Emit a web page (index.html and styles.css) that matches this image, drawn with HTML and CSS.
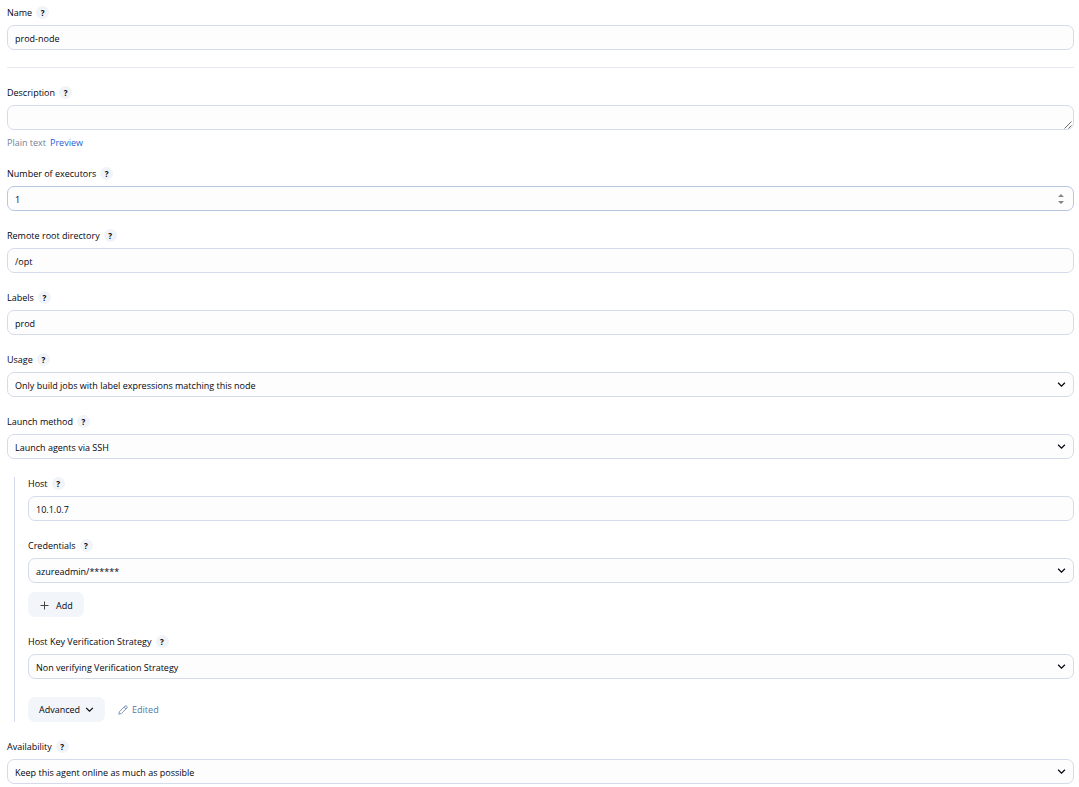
FILE: index.html
```html
<!DOCTYPE html>
<html lang="en">
<head>
    <meta charset="UTF-8">
    <meta name="viewport" content="width=device-width, initial-scale=1.0">
    <title>prod-node Configure</title>
    <link rel="stylesheet" href="styles.css">
</head>
<body>
    <form class="config">
        <div class="field">
            <div class="field-label">
                <label for="name">Name</label>
                <button type="button" class="help">?</button>
            </div>
            <input class="control" type="text" id="name" value="prod-node">
        </div>
        <hr>
        <div class="field">
            <div class="field-label">
                <label for="description">Description</label>
                <button type="button" class="help">?</button>
            </div>
            <div class="control-wrap">
                <textarea class="control" id="description" rows="1"></textarea>
                <svg class="grip" viewBox="0 0 8 8"><path d="M0.5 7.5L7.5 0.5M4.5 7.5L7.5 4.5"/></svg>
            </div>
            <div class="preview">
                <span>Plain text</span>
                <a href="#">Preview</a>
            </div>
        </div>
        <div class="field">
            <div class="field-label">
                <label for="executors">Number of executors</label>
                <button type="button" class="help">?</button>
            </div>
            <div class="control-wrap">
                <input class="control hovered" type="number" id="executors" value="1">
                <svg class="stepper" viewBox="0 0 8 12"><path d="M1 4L4 1L7 4ZM1 8L4 11L7 8Z"/></svg>
            </div>
        </div>
        <div class="field">
            <div class="field-label">
                <label for="root">Remote root directory</label>
                <button type="button" class="help">?</button>
            </div>
            <input class="control" type="text" id="root" value="/opt">
        </div>
        <div class="field">
            <div class="field-label">
                <label for="labels">Labels</label>
                <button type="button" class="help">?</button>
            </div>
            <input class="control" type="text" id="labels" value="prod">
        </div>
        <div class="field">
            <div class="field-label">
                <label for="usage">Usage</label>
                <button type="button" class="help">?</button>
            </div>
            <div class="control-wrap">
                <select class="control" id="usage">
                    <option>Only build jobs with label expressions matching this node</option>
                </select>
                <svg class="arrow" viewBox="0 0 8 8"><path d="M1 2.5L4 5.5L7 2.5"/></svg>
            </div>
        </div>
        <div class="field">
            <div class="field-label">
                <label for="launch">Launch method</label>
                <button type="button" class="help">?</button>
            </div>
            <div class="control-wrap">
                <select class="control" id="launch">
                    <option>Launch agents via SSH</option>
                </select>
                <svg class="arrow" viewBox="0 0 8 8"><path d="M1 2.5L4 5.5L7 2.5"/></svg>
            </div>
        </div>
        <div class="nested">
            <div class="field">
                <div class="field-label">
                    <label for="host">Host</label>
                    <button type="button" class="help">?</button>
                </div>
                <input class="control" type="text" id="host" value="10.1.0.7">
            </div>
            <div class="field">
                <div class="field-label">
                    <label for="credentials">Credentials</label>
                    <button type="button" class="help">?</button>
                </div>
                <div class="control-wrap">
                    <select class="control" id="credentials">
                        <option>azureadmin/******</option>
                    </select>
                    <svg class="arrow" viewBox="0 0 8 8"><path d="M1 2.5L4 5.5L7 2.5"/></svg>
                </div>
                <button type="button" class="btn btn-add">
                    <svg class="plus" viewBox="0 0 9 9"><path d="M4.5 0.5V8.5M0.5 4.5H8.5"/></svg>
                    Add
                </button>
            </div>
            <div class="field">
                <div class="field-label">
                    <label for="strategy">Host Key Verification Strategy</label>
                    <button type="button" class="help">?</button>
                </div>
                <div class="control-wrap">
                    <select class="control" id="strategy">
                        <option>Non verifying Verification Strategy</option>
                    </select>
                    <svg class="arrow" viewBox="0 0 8 8"><path d="M1 2.5L4 5.5L7 2.5"/></svg>
                </div>
            </div>
            <div class="advanced">
                <button type="button" class="btn">
                    Advanced
                    <svg class="chevron" viewBox="0 0 8 8"><path d="M1 2.5L4 5.5L7 2.5"/></svg>
                </button>
                <span class="edited">
                    <svg class="pencil" viewBox="0 0 10 10"><path d="M0.8 9.2L1.5 6.6L7 1.1Q7.9 0.3 8.8 1.2Q9.7 2.1 8.9 3L3.4 8.5ZM6 2.1L7.9 4"/></svg>
                    Edited
                </span>
            </div>
        </div>
        <div class="field">
            <div class="field-label">
                <label for="availability">Availability</label>
                <button type="button" class="help">?</button>
            </div>
            <div class="control-wrap">
                <select class="control" id="availability">
                    <option>Keep this agent online as much as possible</option>
                </select>
                <svg class="arrow" viewBox="0 0 8 8"><path d="M1 2.5L4 5.5L7 2.5"/></svg>
            </div>
        </div>
    </form>
</body>
</html>
```
FILE: styles.css
```css
* {
    box-sizing: border-box;
}
body {
    margin: 0;
    padding: 6px 5px 0 7px;
    background: #fff;
    color: #05050f;
    font: 9px/13px "Open Sans", "Noto Sans", sans-serif;
}
input, select, textarea, button {
    font: inherit;
    color: inherit;
}
svg {
    fill: none;
    stroke: currentColor;
}
.config {
    display: flex;
    flex-direction: column;
    gap: 18px;
}
hr {
    width: 100%;
    height: 1px;
    margin: -1px 0 0;
    border: 0;
    background: #e6e9f0;
}
.field-label {
    display: flex;
    align-items: center;
    gap: 4px;
    height: 13px;
    margin-bottom: 6px;
}
.help {
    width: 13px;
    height: 13px;
    padding: 0;
    border: 0;
    border-radius: 50%;
    background: #f0f4f8;
    font-size: 8px;
    font-weight: 700;
    line-height: 13px;
    text-align: center;
}
.control-wrap {
    position: relative;
}
.control {
    display: block;
    width: 100%;
    height: 25px;
    margin: 0;
    padding: 1px 7px 0;
    border: 1px solid #d5dbea;
    border-radius: 7px;
    background: #fdfdfd;
    outline: none;
    appearance: none;
}
textarea.control {
    padding: 5px 7px;
    resize: none;
    overflow: hidden;
}
.control.hovered {
    border-color: #b9c6e0;
}
input[type="number"] {
    appearance: textfield;
}
input::-webkit-inner-spin-button {
    appearance: none;
    margin: 0;
}
.arrow, .stepper, .grip {
    position: absolute;
    pointer-events: none;
}
.arrow {
    top: 8px;
    right: 8px;
    width: 9px;
    height: 9px;
    stroke-width: 1.1;
}
.stepper {
    top: 7px;
    right: 9px;
    width: 8px;
    height: 12px;
    fill: #858585;
    stroke: none;
}
.grip {
    right: 2px;
    bottom: 1px;
    width: 8px;
    height: 8px;
    stroke: #444;
    stroke-width: 0.8;
}
.preview {
    display: flex;
    gap: 4px;
    margin-top: 6px;
    color: #717f98;
}
a {
    color: #1a5fd8;
    text-decoration: none;
}
.nested {
    display: flex;
    flex-direction: column;
    gap: 18px;
    margin-left: 7px;
    padding-left: 13px;
    border-left: 1px solid #d5dbea;
}
.btn {
    display: flex;
    align-items: center;
    height: 25px;
    padding: 0 11px;
    border: 0;
    border-radius: 7px;
    background: #f2f5f9;
}
.btn-add {
    gap: 7px;
    margin-top: 9px;
    padding: 1px 11px 0 12px;
}
.plus {
    width: 9px;
    height: 9px;
    stroke: #444;
}
.chevron {
    width: 9px;
    height: 9px;
    margin-left: 5px;
    stroke-width: 1;
}
.advanced {
    display: flex;
    align-items: center;
    gap: 13px;
}
.edited {
    display: flex;
    align-items: center;
    gap: 4px;
    color: #5278a5;
}
.pencil {
    width: 10px;
    height: 10px;
    stroke: #7389b5;
    stroke-width: 0.9;
}
```
